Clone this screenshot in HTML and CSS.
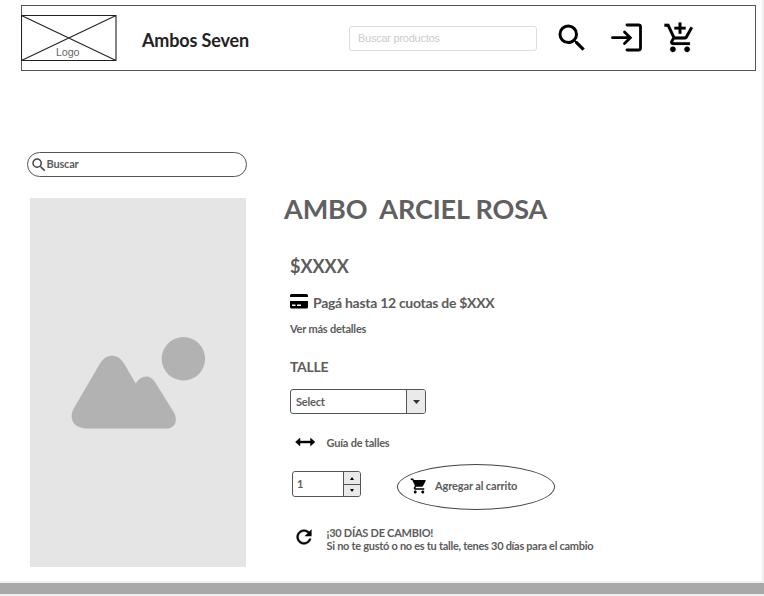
FILE: index.html
```html
<!DOCTYPE html>
<html lang="es">
<head>
<meta charset="utf-8">
<title>Ambos Seven</title>
<link rel="stylesheet" href="styles.css">
</head>
<body>
<div class="page">
  <header class="header">
    <div class="logo">
      <svg class="logo-cross" width="96" height="47" viewBox="0 0 96 47"><path d="M.5 .5H95V45.500H.5ZM.5 .5L95 45.500M95 .5L.5 45.500" fill="none" stroke="#222" stroke-width="1.100"/></svg>
      <span class="logo-label">Logo</span>
    </div>
    <h1 class="brand"><span>Ambos Seven</span></h1>
    <div class="product-search">Buscar productos</div>
    <nav class="actions">
      <svg width="36" height="36" viewBox="0 0 24 24"><path d="M15.500 14h-.79l-.28-.27A6.471 6.471 0 0 0 16 9.500 6.500 6.500 0 1 0 9.500 16c1.610 0 3.090-.59 4.230-1.570l.27.28v.79l5 4.990L20.490 19l-4.990-5zm-6 0C7.010 14 5 11.990 5 9.500S7.010 5 9.500 5 14 7.010 14 9.500 11.990 14 9.500 14z"/></svg>
      <svg class="login" width="32" height="30" viewBox="0 0 32 30"><path d="M16 2H27.500Q29.500 2 29.500 4V25Q29.500 27 27.500 27H16M1.500 14.700H19M13.500 9L19.300 14.700L13.500 20.400" fill="none" stroke="#000" stroke-width="2.800" stroke-linecap="round"/></svg>
      <svg class="cart-add" width="34" height="34" viewBox="0 0 24 24"><path d="M11 9h2V6h3V4h-3V1h-2v3H8v2h3v3zm-4 9c-1.100 0-1.990.9-1.990 2S5.900 22 7 22s2-.9 2-2-.9-2-2-2zm10 0c-1.100 0-1.990.9-1.990 2s.89 2 1.990 2 2-.9 2-2-.9-2-2-2zm-9.830-3.250l.03-.12.9-1.630h7.450c.75 0 1.410-.41 1.750-1.030l3.860-7.010L19.420 4h-.01l-1.100 2-2.760 5H8.530l-.13-.27L6.160 6l-.95-2-.94-2H1v2h2l3.600 7.590-1.350 2.450c-.16.28-.25.61-.25.96 0 1.100.9 2 2 2h12v-2H7.420c-.13 0-.25-.11-.25-.25z" stroke="#000" stroke-width=".1"/></svg>
    </nav>
  </header>
  <main class="main">
    <aside class="side">
      <div class="pill">
        <svg width="18" height="18" viewBox="0 0 24 24"><path fill="#444" d="M15.500 14h-.79l-.28-.27A6.471 6.471 0 0 0 16 9.500 6.500 6.500 0 1 0 9.500 16c1.610 0 3.090-.59 4.230-1.570l.27.28v.79l5 4.990L20.490 19l-4.990-5zm-6 0C7.010 14 5 11.990 5 9.500S7.010 5 9.500 5 14 7.010 14 9.500 11.990 14 9.500 14z"/></svg>
        <span>Buscar</span>
      </div>
      <div class="photo">
        <svg width="216" height="369" viewBox="30 198 216 369"><path fill="#b2b2b2" d="M100 363.500C106 353 118 353 124 363.500L135.700 383.500C141 375 149.500 374 155 382L173 411C179 420 175 428.500 167 428.500H87C74 428.500 68 419 74 408Z"/><circle cx="183.400" cy="358.800" r="21.700" fill="#b2b2b2"/></svg>
      </div>
    </aside>
    <section class="details">
      <h2 class="title">AMBO&nbsp; ARCIEL ROSA</h2>
      <div class="price">$XXXX</div>
      <div class="row pay">
        <svg width="19" height="16" viewBox="0 0 19 16"><path d="M1.500 0H16.500Q18 0 18 1.500V3H0V1.500Q0 0 1.500 0ZM0 7H18V13Q18 14.500 16.500 14.500H1.500Q0 14.500 0 13ZM2 10.500V12H5.500V10.500ZM7 10.500V12H11V10.500Z" fill-rule="evenodd"/></svg>
        <span>Pagá hasta 12 cuotas de $XXX</span>
      </div>
      <div class="more">Ver más detalles</div>
      <div class="size-label">TALLE</div>
      <div class="select"><span>Select</span><i class="select-button"><svg width="7" height="4" viewBox="0 0 7 4"><path d="M0 0H7L3.500 4Z" fill="#333"/></svg></i></div>
      <div class="row guide">
        <svg width="21" height="10" viewBox="0 0 21 10"><path d="M.5 5L5 1V4H15.500V1L20 5L15.500 9V6H5V9Z" stroke="#000" stroke-width=".4"/></svg>
        <span>Guía de talles</span>
      </div>
      <div class="buy">
        <div class="stepper"><span>1</span><div class="steps"><i><svg width="4" height="3" viewBox="0 0 4 3"><path d="M0 3L2 0L4 3Z"/></svg></i><i><svg width="4" height="3" viewBox="0 0 4 3"><path d="M0 0L2 3L4 0Z"/></svg></i></div></div>
        <div class="add">
          <svg width="18" height="18" viewBox="0 0 24 24"><path d="M7 18c-1.100 0-1.990.9-1.990 2S5.900 22 7 22s2-.9 2-2-.9-2-2-2zM1 2v2h2l3.600 7.590-1.350 2.450c-.16.28-.25.61-.25.96 0 1.100.9 2 2 2h12v-2H7.420c-.14 0-.25-.11-.25-.25l.03-.12.9-1.630h7.450c.75 0 1.410-.41 1.750-1.030l3.580-6.490c.08-.14.12-.31.12-.48 0-.55-.45-1-1-1H5.210l-.94-2H1zm16 16c-1.100 0-1.990.9-1.990 2s.89 2 1.990 2 2-.9 2-2-.9-2-2-2z"/></svg>
          <span>Agregar al carrito</span>
        </div>
      </div>
      <div class="row exchange">
        <svg width="22" height="22" viewBox="0 0 24 24"><path d="M17.650 6.350C16.200 4.900 14.210 4 12 4c-4.420 0-7.990 3.580-7.990 8s3.570 8 7.990 8c3.730 0 6.840-2.550 7.730-6h-2.080c-.82 2.330-3.040 4-5.650 4-3.310 0-6-2.690-6-6s2.690-6 6-6c1.660 0 3.140.69 4.220 1.780L13 11h7V4l-2.350 2.350z" stroke="#000" stroke-width=".5"/></svg>
        <p><span class="exchange-title">¡30 DÍAS DE CAMBIO!</span><br><span>Si no te gustó o no es tu talle, tenes 30 días para el cambio</span></p>
      </div>
    </section>
  </main>
</div>
<div class="scrollbar"></div>
</body>
</html>
```

FILE: styles.css
```css
* { box-sizing: border-box; }
body {
  margin: 0;
  height: 596px;
  overflow: hidden;
  background: #efefef;
  color: #5c5c5c;
  font: bold 11px/13px Lato, sans-serif;
  letter-spacing: -0.2px;
}
svg { display: block; flex: none; }
h1, h2, p { margin: 0; }
.page { width: 762px; height: 581px; padding: 5px 0 0 21px; background: #fff; }
.header {
  width: 735px;
  height: 66px;
  display: flex;
  align-items: flex-start;
  border: 1px solid #555;
}
.logo { position: relative; width: 96px; height: 47px; margin: 9px 0 0 -1px; }
.logo-label {
  position: absolute;
  left: 35px;
  top: 31px;
  font: 10.700px/13px "Liberation Sans", sans-serif;
  letter-spacing: -0.1px;
  color: #666;
}
.brand { width: 207px; margin: 22px 0 0 25px; font-size: 18px; line-height: 24px; color: #222; white-space: nowrap; letter-spacing: -0.14px; }
.product-search {
  width: 188px;
  height: 25px;
  margin-top: 20px;
  padding: 0 8px;
  border: 1px solid #ddd;
  border-radius: 3px;
  font: 11px/23px "Liberation Sans", sans-serif;
  letter-spacing: -0.25px;
  color: #ccc;
}
.actions { display: flex; margin: 14px 0 0 17px; }
.login { margin: 3px 0 0 21px; }
.cart-add { margin: 1px 0 0 20px; }
.main { display: flex; margin-top: 81px; }
.side { width: 226px; margin-left: 6px; }
.pill {
  display: flex;
  align-items: center;
  width: 220px;
  height: 25px;
  padding-left: 2px;
  border: 1px solid #555;
  border-radius: 13px;
}
.pill svg { margin-top: 1px; }
.pill span { margin: -3px 0 0 -1.500px; }
.photo { width: 216px; height: 369px; margin: 21px 0 0 3px; background: #e5e5e5; }
.details { margin: 39px 0 0 31px; padding-left: 6px; }
.title { margin-left: -6px; font-size: 27px; line-height: 36px; color: #606060; white-space: nowrap; letter-spacing: -0.12px; }
.price { margin-top: 27px; font-size: 18px; line-height: 24px; letter-spacing: 0; }
.row { display: flex; }
.pay { margin-top: 16px; font-size: 14px; line-height: 18px; letter-spacing: -0.29px; }
.pay svg { margin: 0 4px 0 0; }
.more { margin-top: 10px; }
.size-label { margin-top: 23px; font-size: 14px; line-height: 18px; letter-spacing: -0.3px; }
.select {
  display: flex;
  justify-content: space-between;
  width: 136px;
  height: 25px;
  margin-top: 13px;
  padding-left: 5px;
  border: 1px solid #555;
  border-radius: 3px;
  line-height: 23px;
}
.select-button {
  display: grid;
  place-items: center;
  width: 19px;
  border-left: 1px solid #555;
  border-radius: 0 2px 2px 0;
  background: #eaeaea;
}
.guide { margin-top: 22px; }
.guide svg { margin: 1px 10.500px 0 5px; }
.buy { display: flex; margin: 15px 0 0 2px; }
.stepper {
  display: flex;
  justify-content: space-between;
  width: 69px;
  height: 26px;
  margin: 7px 0 0 0;
  padding-left: 4px;
  border: 1px solid #555;
  border-radius: 3px;
  line-height: 23px;
}
.steps { display: grid; grid-template-rows: 1fr 1fr; width: 17px; border-left: 1px solid #555; border-radius: 0 2px 2px 0; background: #eaeaea; }
.steps i { display: grid; place-items: center; }
.steps i + i { border-top: 1px solid #555; }
.add {
  display: flex;
  align-items: center;
  width: 158px;
  height: 46px;
  margin-left: 36px;
  padding-left: 12px;
  border: 1px solid #444;
  border-radius: 50%;
}
.add svg { margin-top: -2px; }
.add span { margin: -3px 0 0 7px; letter-spacing: -0.12px; }
.exchange { margin-top: 16px; letter-spacing: -0.28px; }
.exchange svg { margin: 0 11.500px 0 3px; }
.exchange-title { letter-spacing: -0.26px; }
.scrollbar { height: 11px; margin-top: 2px; background: #a8a8a8; }
```
